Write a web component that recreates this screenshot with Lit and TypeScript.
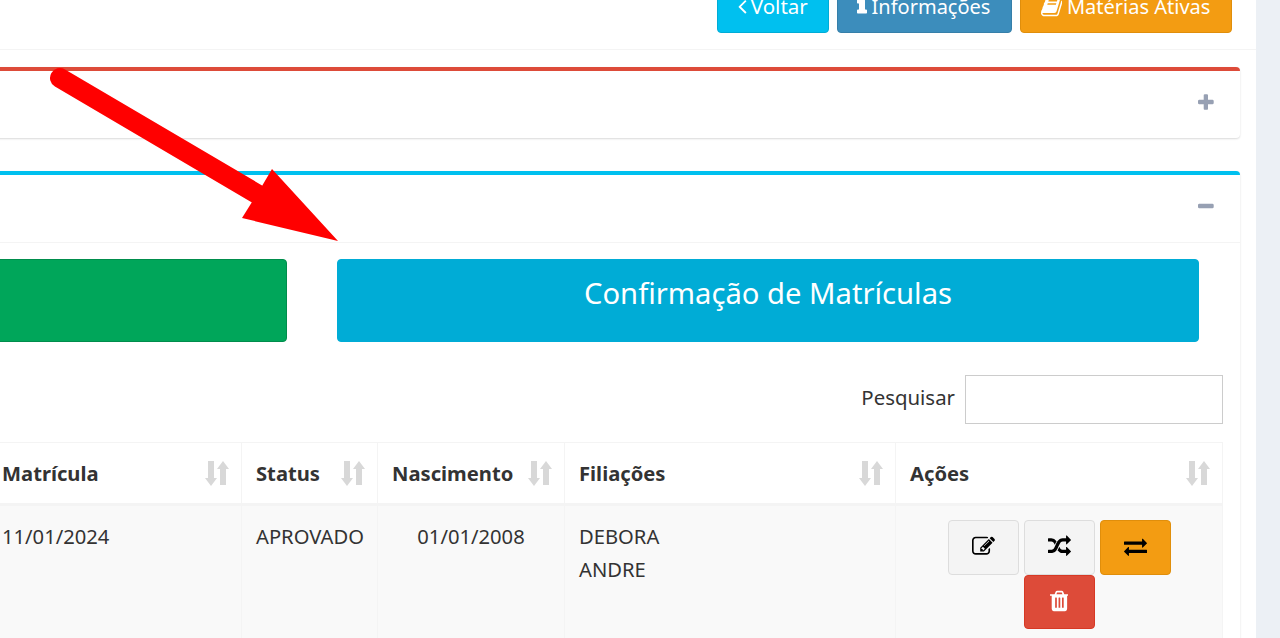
import { LitElement, css, html, svg } from "lit";
import { customElement } from "lit/decorators.js";

// font awesome 4 glyphs, y pointing down
const ICONS: Record<string, [number, string]> = {
  angle: [640, "M627 544q0 13-10 23l-393 393 393 393q10 10 10 23t-10 23l-50 50q-10 10-23 10t-23-10l-466-466q-10-10-10-23t10-23l466-466q10-10 23-10t23 10l50 50q10 10 10 23z"],
  info: [640, "M640 1376v128q0 26-19 45t-45 19h-512q-26 0-45-19t-19-45v-128q0-26 19-45t45-19h64v-384h-64q-26 0-45-19t-19-45v-128q0-26 19-45t45-19h384q26 0 45 19t19 45v576h64q26 0 45 19t19 45zm-128-1152v192q0 26-19 45t-45 19h-256q-26 0-45-19t-19-45v-192q0-26 19-45t45-19h256q26 0 45 19t19 45z"],
  book: [1664, "M1639 478q40 57 18 129l-275 906q-19 64-76.500 107.500t-122.500 43.500h-923q-77 0-148.500-53.500t-99.500-131.500q-24-67-2-127 0-4 3-27t4-37q1-8-3-21.500t-3-19.500q2-11 8-21t16.500-23.500 16.500-23.500q23-38 45-91.500t30-91.500q3-10 .5-30t-.5-28q3-11 17-28t17-23q21-36 42-92t25-90q1-9-2.500-32t.5-28q4-13 22-30.500t22-22.500q19-26 42.500-84.500t27.500-96.500q1-8-3-25.500t-2-26.500q2-8 9-18t18-23 17-21q8-12 16.500-30.500t15-35 16-36 19.500-32 26.500-23.500 36-11.500 47.500 5.500l-1 3q38-9 51-9h761q74 0 114 56t18 130l-274 906q-36 119-71.500 153.500t-128.500 34.500h-869q-27 0-38 15-11 16-1 43 24 70 144 70h923q29 0 56-15.500t35-41.500l300-987q7-22 5-57 38 15 59 43zm-1064 2q-4 13 2 22.500t20 9.500h608q13 0 25.500-9.500t16.500-22.500l21-64q4-13-2-22.500t-20-9.500h-608q-13 0-25.500 9.500t-16.500 22.500zm-83 256q-4 13 2 22.500t20 9.500h608q13 0 25.500-9.500t16.500-22.500l21-64q4-13-2-22.500t-20-9.500h-608q-13 0-25.500 9.500t-16.500 22.500z"],
  plus: [1408, "M1408 800v192q0 40-28 68t-68 28h-416v416q0 40-28 68t-68 28h-192q-40 0-68-28t-28-68v-416h-416q-40 0-68-28t-28-68v-192q0-40 28-68t68-28h416v-416q0-40 28-68t68-28h192q40 0 68 28t28 68v416h416q40 0 68 28t28 68z"],
  minus: [1408, "M1408 800v192q0 40-28 68t-68 28h-1216q-40 0-68-28t-28-68v-192q0-40 28-68t68-28h1216q40 0 68 28t28 68z"],
  edit: [1792, "M888 1184l116-116-152-152-116 116v56h96v96h56zm440-720q-16-16-33 1l-350 350q-17 17-1 33t33-1l350-350q17-17 1-33zm80 594v190q0 119-84.500 203.500t-203.500 84.500h-832q-119 0-203.500-84.500t-84.500-203.500v-832q0-119 84.500-203.500t203.500-84.500h832q63 0 117 25 15 7 18 23 3 17-9 29l-49 49q-14 14-32 8-23-6-45-6h-832q-66 0-113 47t-47 113v832q0 66 47 113t113 47h832q66 0 113-47t47-113v-126q0-13 9-22l64-64q15-15 35-7t20 29zm-96-738l288 288-672 672h-288v-288zm444 132l-92 92-288-288 92-92q28-28 68-28t68 28l152 152q28 28 28 68t-28 68z"],
  random: [1792, "M666 481q-60 92-137 273-22-45-37-72.500t-40.500-63.500-51-56.500-63-35-81.500-14.500h-224q-14 0-23-9t-9-23v-192q0-14 9-23t23-9h224q250 0 410 225zm1126 799q0 14-9 23l-320 320q-9 9-23 9-13 0-22.500-9.500t-9.500-22.500v-192q-32 0-85 .5t-81 1-73-1-71-5-64-10.500-63-18.500-58-28.500-59-40-55-53.500-56-69.500q59-93 136-273 22 45 37 72.500t40.500 63.500 51 56.500 63 35 81.500 14.500h256v-192q0-14 9-23t23-9q12 0 24 10l319 319q9 9 9 23zm0-896q0 14-9 23l-320 320q-9 9-23 9-13 0-22.500-9.500t-9.500-22.500v-192h-256q-48 0-87 15t-69 45-51 61.500-45 77.500q-32 62-78 171-29 66-49.500 111t-54 105-64 100-74 83-90 68.500-106.500 42-128 16.500h-224q-14 0-23-9t-9-23v-192q0-14 9-23t23-9h224q48 0 87-15t69-45 51-61.500 45-77.500q32-62 78-171 29-66 49.500-111t54-105 64-100 74-83 90-68.500 106.500-42 128-16.500h256v-192q0-14 9-23t23-9q12 0 24 10l319 319q9 9 9 23z"],
  exchange: [1792, "M1792 1184v192q0 13-9.500 22.500t-22.500 9.500h-1376v192q0 13-9.500 22.500t-22.500 9.500q-12 0-24-10l-319-320q-9-9-9-22 0-14 9-23l320-320q9-9 23-9 13 0 22.500 9.500t9.500 22.500v192h1376q13 0 22.500 9.500t9.500 22.500zm0-544q0 14-9 23l-320 320q-9 9-23 9-13 0-22.500-9.500t-9.500-22.500v-192h-1376q-13 0-22.500-9.500t-9.500-22.500v-192q0-13 9.500-22.500t22.500-9.500h1376v-192q0-14 9-23t23-9q12 0 24 10l319 319q9 9 9 23z"],
  trash: [1408, "M512 1376v-704q0-14-9-23t-23-9h-64q-14 0-23 9t-9 23v704q0 14 9 23t23 9h64q14 0 23-9t9-23zm256 0v-704q0-14-9-23t-23-9h-64q-14 0-23 9t-9 23v704q0 14 9 23t23 9h64q14 0 23-9t9-23zm256 0v-704q0-14-9-23t-23-9h-64q-14 0-23 9t-9 23v704q0 14 9 23t23 9h64q14 0 23-9t9-23zm-544-992h448l-48-117q-7-9-17-11h-317q-10 2-17 11zm928 32v64q0 14-9 23t-23 9h-96v948q0 83-47 143.500t-113 60.500h-832q-66 0-113-58.500t-47-141.500v-952h-96q-14 0-23-9t-9-23v-64q0-14 9-23t23-9h309l70-167q15-37 54-63t79-26h320q40 0 79 26t54 63l70 167h309q14 0 23 9t9 23z"],
};

function icon(name: string, size: number) {
  const [w, d] = ICONS[name];
  return html`<svg class="ic" width=${(size * w) / 1792} height=${size} viewBox="0 0 ${w} 1792" fill="currentColor">${svg`<path d=${d}></path>`}</svg>`;
}

const sortIcon = html`<svg class="sort" width="24" height="26" viewBox="0 0 24 26" fill="#d8d8d8">
  <path d="M3 1h6v17h3l-6 8-6-8h3z"></path>
  <path d="M15 25h6V9h3l-6-8-6 8h3z"></path>
</svg>`;

const COLS = [
  { label: "", width: 70 },
  { label: "Matrícula", width: 254 },
  { label: "Status", width: 136 },
  { label: "Nascimento", width: 187 },
  { label: "Filiações", width: 331 },
  { label: "Ações", width: 327 },
];

@customElement("app-root")
class AppRoot extends LitElement {
  static styles = css`
    :host {
      display: flex;
      height: 638px;
      overflow: hidden;
      background: #ecf0f5;
      font-family: "Noto Sans", sans-serif;
      color: #333;
      font-size: 20px;
    }
    .page {
      position: relative;
      width: 1256px;
      height: 638px;
      flex: none;
      background: #fff;
      overflow: hidden;
    }
    .top {
      display: flex;
      justify-content: flex-end;
      gap: 8px;
      margin-top: -17px;
      padding: 0 24px 16px 0;
      border-bottom: 1px solid #f4f4f4;
    }
    .btn {
      display: flex;
      align-items: center;
      justify-content: center;
      box-sizing: border-box;
      height: 50px;
      padding-bottom: 4px;
      border: 1px solid;
      border-radius: 4px;
      color: #fff;
      gap: 4px;
    }
    .btn .info-glyph { margin-bottom: 6px; }
    .voltar { width: 112px; background: #00c0ef; border-color: #00acd6; font-size: 20.5px; }
    .info { width: 175px; background: #3c8dbc; border-color: #367fa9; gap: 5px; padding-right: 2px; }
    .materias { width: 212px; background: #f39c12; border-color: #e08e0b; gap: 5px; padding-right: 1px; }
    .boxes {
      margin: 17px 16px 0 -100px;
    }
    .box {
      background: #fff;
      border-radius: 4px;
      border-top: 4px solid #dd4b39;
      box-shadow: 0 1px 2px rgba(0, 0, 0, 0.15);
    }
    .box + .box {
      margin-top: 33px;
      border-top-color: #00c0ef;
    }
    .box-head {
      display: flex;
      align-items: center;
      justify-content: flex-end;
      box-sizing: border-box;
      height: 67px;
      padding: 0 26px 6px 0;
      color: #97a0b3;
    }
    .open .box-head {
      height: 68px;
      border-bottom: 1px solid #f4f4f4;
    }
    .box-body {
      padding: 16px 17px 0;
    }
    .actions {
      display: grid;
      grid-template-columns: 1fr 862px;
      column-gap: 50px;
      padding-right: 24px;
    }
    .big {
      display: flex;
      align-items: center;
      justify-content: center;
      box-sizing: border-box;
      height: 83px;
      padding-bottom: 16px;
      border: 1px solid;
      border-radius: 4px;
      color: #fff;
      font-size: 29.2px;
    }
    .green { background: #00a65a; border-color: #008d4c; }
    .cyan { background: #00acd6; border-color: #00acd6; }
    .search {
      display: flex;
      justify-content: flex-end;
      align-items: center;
      gap: 10px;
      margin-top: 33px;
    }
    .search label {
      padding-bottom: 6px;
      font-size: 20.4px;
    }
    .search input {
      box-sizing: border-box;
      width: 258px;
      height: 49px;
      border: 1px solid #ccc;
      background: #fff;
    }
    table {
      table-layout: fixed;
      border-collapse: collapse;
      width: 1305px;
      margin-top: 18px;
      font-size: 20.2px;
    }
    th, td {
      border: 1px solid #f4f4f4;
      padding: 0 14px;
    }
    th {
      height: 60px;
      border-bottom-width: 3px;
      text-align: left;
    }
    .head-cell {
      display: flex;
      align-items: center;
      justify-content: space-between;
      margin-right: -2px;
    }
    td {
      vertical-align: top;
      height: 160px;
      padding-top: 14px;
      line-height: 33px;
      background: #f9f9f9;
    }
    .center { text-align: center; }
    .row-btns {
      display: flex;
      flex-wrap: wrap;
      justify-content: center;
      column-gap: 5px;
    }
    .act {
      display: flex;
      align-items: center;
      justify-content: center;
      box-sizing: border-box;
      width: 71px;
      height: 55px;
      padding-bottom: 2px;
      border: 1px solid #ddd;
      border-radius: 4px;
      background: #f4f4f4;
      color: #000;
    }
    .act.warn { background: #f39c12; border-color: #e08e0b; }
    .act.del { height: 54px; background: #dd4b39; border-color: #d73925; color: #fff; }
    .ic { display: block; flex: none; }
    .arrow {
      position: absolute;
      left: 0;
      top: 0;
      pointer-events: none;
    }
  `;

  render() {
    return html`
      <div class="page">
        <div class="top">
          <div class="btn voltar">${icon("angle", 24)}<span>Voltar</span></div>
          <div class="btn info"><span class="info-glyph">${icon("info", 28)}</span><span>Informações</span></div>
          <div class="btn materias">${icon("book", 23)}<span>Matérias Ativas</span></div>
        </div>
        <div class="boxes">
          <section class="box">
            <div class="box-head">${icon("plus", 20)}</div>
          </section>
          <section class="box open">
            <div class="box-head">${icon("minus", 20)}</div>
            <div class="box-body">
              <div class="actions">
                <div class="big green"></div>
                <div class="big cyan">Confirmação de Matrículas</div>
              </div>
              <div class="search">
                <label>Pesquisar</label>
                <input type="text" />
              </div>
              <table>
                <colgroup>${COLS.map((c) => html`<col style="width:${c.width}px" />`)}</colgroup>
                <thead>
                  <tr>
                    ${COLS.map((c) => html`<th><div class="head-cell"><span>${c.label}</span>${sortIcon}</div></th>`)}
                  </tr>
                </thead>
                <tbody>
                  <tr>
                    <td></td>
                    <td>11/01/2024</td>
                    <td>APROVADO</td>
                    <td class="center">01/01/2008</td>
                    <td>DEBORA<br />ANDRE</td>
                    <td>
                      <div class="row-btns">
                        <div class="act">${icon("edit", 23)}</div>
                        <div class="act">${icon("random", 23)}</div>
                        <div class="act warn">${icon("exchange", 23)}</div>
                        <div class="act del">${icon("trash", 24)}</div>
                      </div>
                    </td>
                  </tr>
                </tbody>
              </table>
            </div>
          </section>
        </div>
        <svg class="arrow" width="400" height="260" viewBox="0 0 400 260">
          <path d="M60 78L257 194" stroke="#f00" stroke-width="20" stroke-linecap="round" fill="none"></path>
          <path d="M338 241L272 169 262 186 252 202 242 218z" fill="#f00"></path>
        </svg>
      </div>
    `;
  }
}
